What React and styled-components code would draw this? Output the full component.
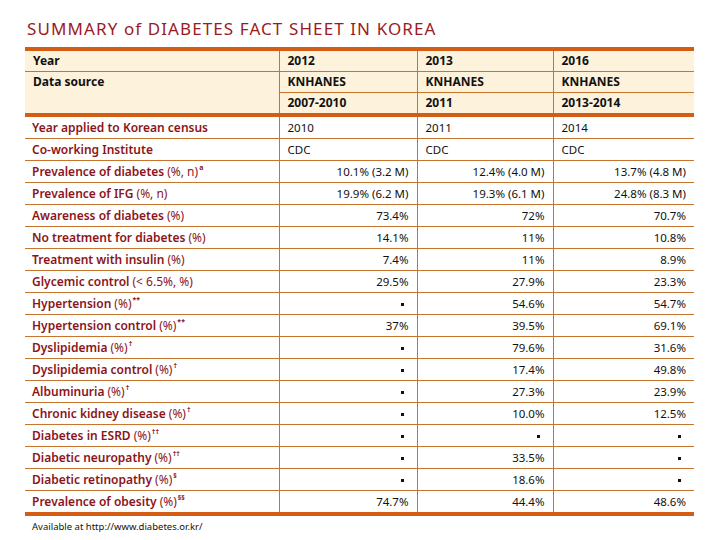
import React from "react";
import styled, { createGlobalStyle } from "styled-components";

const GlobalStyle = createGlobalStyle`
  body {
    margin: 0;
    background: #ffffff;
    font-family: "Noto Sans", "Open Sans", sans-serif;
  }
`;

const Page = styled.div`
  width: 720px;
  height: 540px;
  padding: 17px 0 0 25px;
  box-sizing: border-box;
`;

const Title = styled.h1`
  margin: 0 0 0 2px;
  font-family: "Noto Sans", sans-serif;
  font-weight: 400;
  font-size: 17px;
  line-height: 24px;
  letter-spacing: 1.1px;
  color: #9a1b1f;
`;

const Table = styled.table`
  margin-top: 6px;
  width: 669px;
  border-collapse: collapse;
  table-layout: fixed;
  border-top: 4px solid #d45d16;
  border-bottom: 4px solid #d45d16;
  font-size: 12px;
`;

const Head = styled.thead`
  background: #fdf2dc;
  border-bottom: 4px solid #d45d16;
`;

const Row = styled.tr`
  border-bottom: 1px solid #c9742c;
  &:last-child {
    border-bottom: none;
  }
`;

const Th = styled.th`
  text-align: left;
  font-weight: 700;
  color: #111;
  padding: 0 8px;
  height: 20px;
  border-left: ${(p) => (p.$first ? "none" : "1px solid #c9742c")};
  border-bottom: ${(p) => (p.$last ? "none" : "1px solid #c9742c")};
  vertical-align: ${(p) => (p.$top ? "top" : "middle")};
  line-height: 20px;
`;

const Label = styled.td`
  padding: 0 7px;
  color: #8c1418;
  font-weight: 600;
  white-space: nowrap;
  line-height: 16px;
  height: 21px;
`;

const Unit = styled.span`
  font-weight: 400;
  margin-left: 3px;
`;

const Mark = styled.sup`
  font-size: 7px;
  font-weight: 700;
  margin-left: 1px;
  line-height: 0;
  vertical-align: baseline;
  position: relative;
  top: -6px;
`;

const Cell = styled.td`
  border-left: 1px solid #c9742c;
  padding: 0 8px;
  text-align: ${(p) => (p.$left ? "left" : "right")};
  font-size: 11.5px;
  color: #111;
  white-space: nowrap;
  line-height: 16px;
`;

const Dot = styled.span`
  display: inline-block;
  width: 3px;
  height: 3px;
  background: #111;
  vertical-align: middle;
  margin-right: 5px;
`;

const Footer = styled.div`
  margin: 4px 0 0 7px;
  font-size: 9.5px;
  line-height: 14px;
  color: #111;
`;

const census = [
  ["Year applied to Korean census", "2010", "2011", "2014"],
  ["Co-working Institute", "CDC", "CDC", "CDC"],
];

const rows = [
  ["Prevalence of diabetes", "(%, n)", "a", "10.1% (3.2 M)", "12.4% (4.0 M)", "13.7% (4.8 M)"],
  ["Prevalence of IFG", "(%, n)", "", "19.9% (6.2 M)", "19.3% (6.1 M)", "24.8% (8.3 M)"],
  ["Awareness of diabetes", "(%)", "", "73.4%", "72%", "70.7%"],
  ["No treatment for diabetes", "(%)", "", "14.1%", "11%", "10.8%"],
  ["Treatment with insulin", "(%)", "", "7.4%", "11%", "8.9%"],
  ["Glycemic control", "(< 6.5%, %)", "", "29.5%", "27.9%", "23.3%"],
  ["Hypertension", "(%)", "**", "-", "54.6%", "54.7%"],
  ["Hypertension control", "(%)", "**", "37%", "39.5%", "69.1%"],
  ["Dyslipidemia", "(%)", "†", "-", "79.6%", "31.6%"],
  ["Dyslipidemia control", "(%)", "†", "-", "17.4%", "49.8%"],
  ["Albuminuria", "(%)", "†", "-", "27.3%", "23.9%"],
  ["Chronic kidney disease", "(%)", "†", "-", "10.0%", "12.5%"],
  ["Diabetes in ESRD", "(%)", "††", "-", "-", "-"],
  ["Diabetic neuropathy", "(%)", "††", "-", "33.5%", "-"],
  ["Diabetic retinopathy", "(%)", "§", "-", "18.6%", "-"],
  ["Prevalence of obesity", "(%)", "§§", "74.7%", "44.4%", "48.6%"],
];

const Value = ({ v }) => (v === "-" ? <Dot /> : v);

export default function App() {
  return (
    <Page>
      <GlobalStyle />
      <Title>SUMMARY of DIABETES FACT SHEET IN KOREA</Title>
      <Table>
        <colgroup>
          <col style={{ width: 254 }} />
          <col style={{ width: 138 }} />
          <col style={{ width: 136 }} />
          <col style={{ width: 141 }} />
        </colgroup>
        <Head>
          <tr>
            <Th $first>Year</Th>
            <Th>2012</Th>
            <Th>2013</Th>
            <Th>2016</Th>
          </tr>
          <tr>
            <Th $first $top $last rowSpan={2}>
              Data source
            </Th>
            <Th>KNHANES</Th>
            <Th>KNHANES</Th>
            <Th>KNHANES</Th>
          </tr>
          <tr>
            <Th $last>2007-2010</Th>
            <Th $last>2011</Th>
            <Th $last>2013-2014</Th>
          </tr>
        </Head>
        <tbody>
          {census.map((r) => (
            <Row key={r[0]}>
              <Label>{r[0]}</Label>
              <Cell $left>{r[1]}</Cell>
              <Cell $left>{r[2]}</Cell>
              <Cell $left>{r[3]}</Cell>
            </Row>
          ))}
          {rows.map((r) => (
            <Row key={r[0]}>
              <Label>
                {r[0]}
                <Unit>{r[1]}</Unit>
                {r[2] && <Mark>{r[2]}</Mark>}
              </Label>
              <Cell><Value v={r[3]} /></Cell>
              <Cell><Value v={r[4]} /></Cell>
              <Cell><Value v={r[5]} /></Cell>
            </Row>
          ))}
        </tbody>
      </Table>
      <Footer>Available at http://www.diabetes.or.kr/</Footer>
    </Page>
  );
}
